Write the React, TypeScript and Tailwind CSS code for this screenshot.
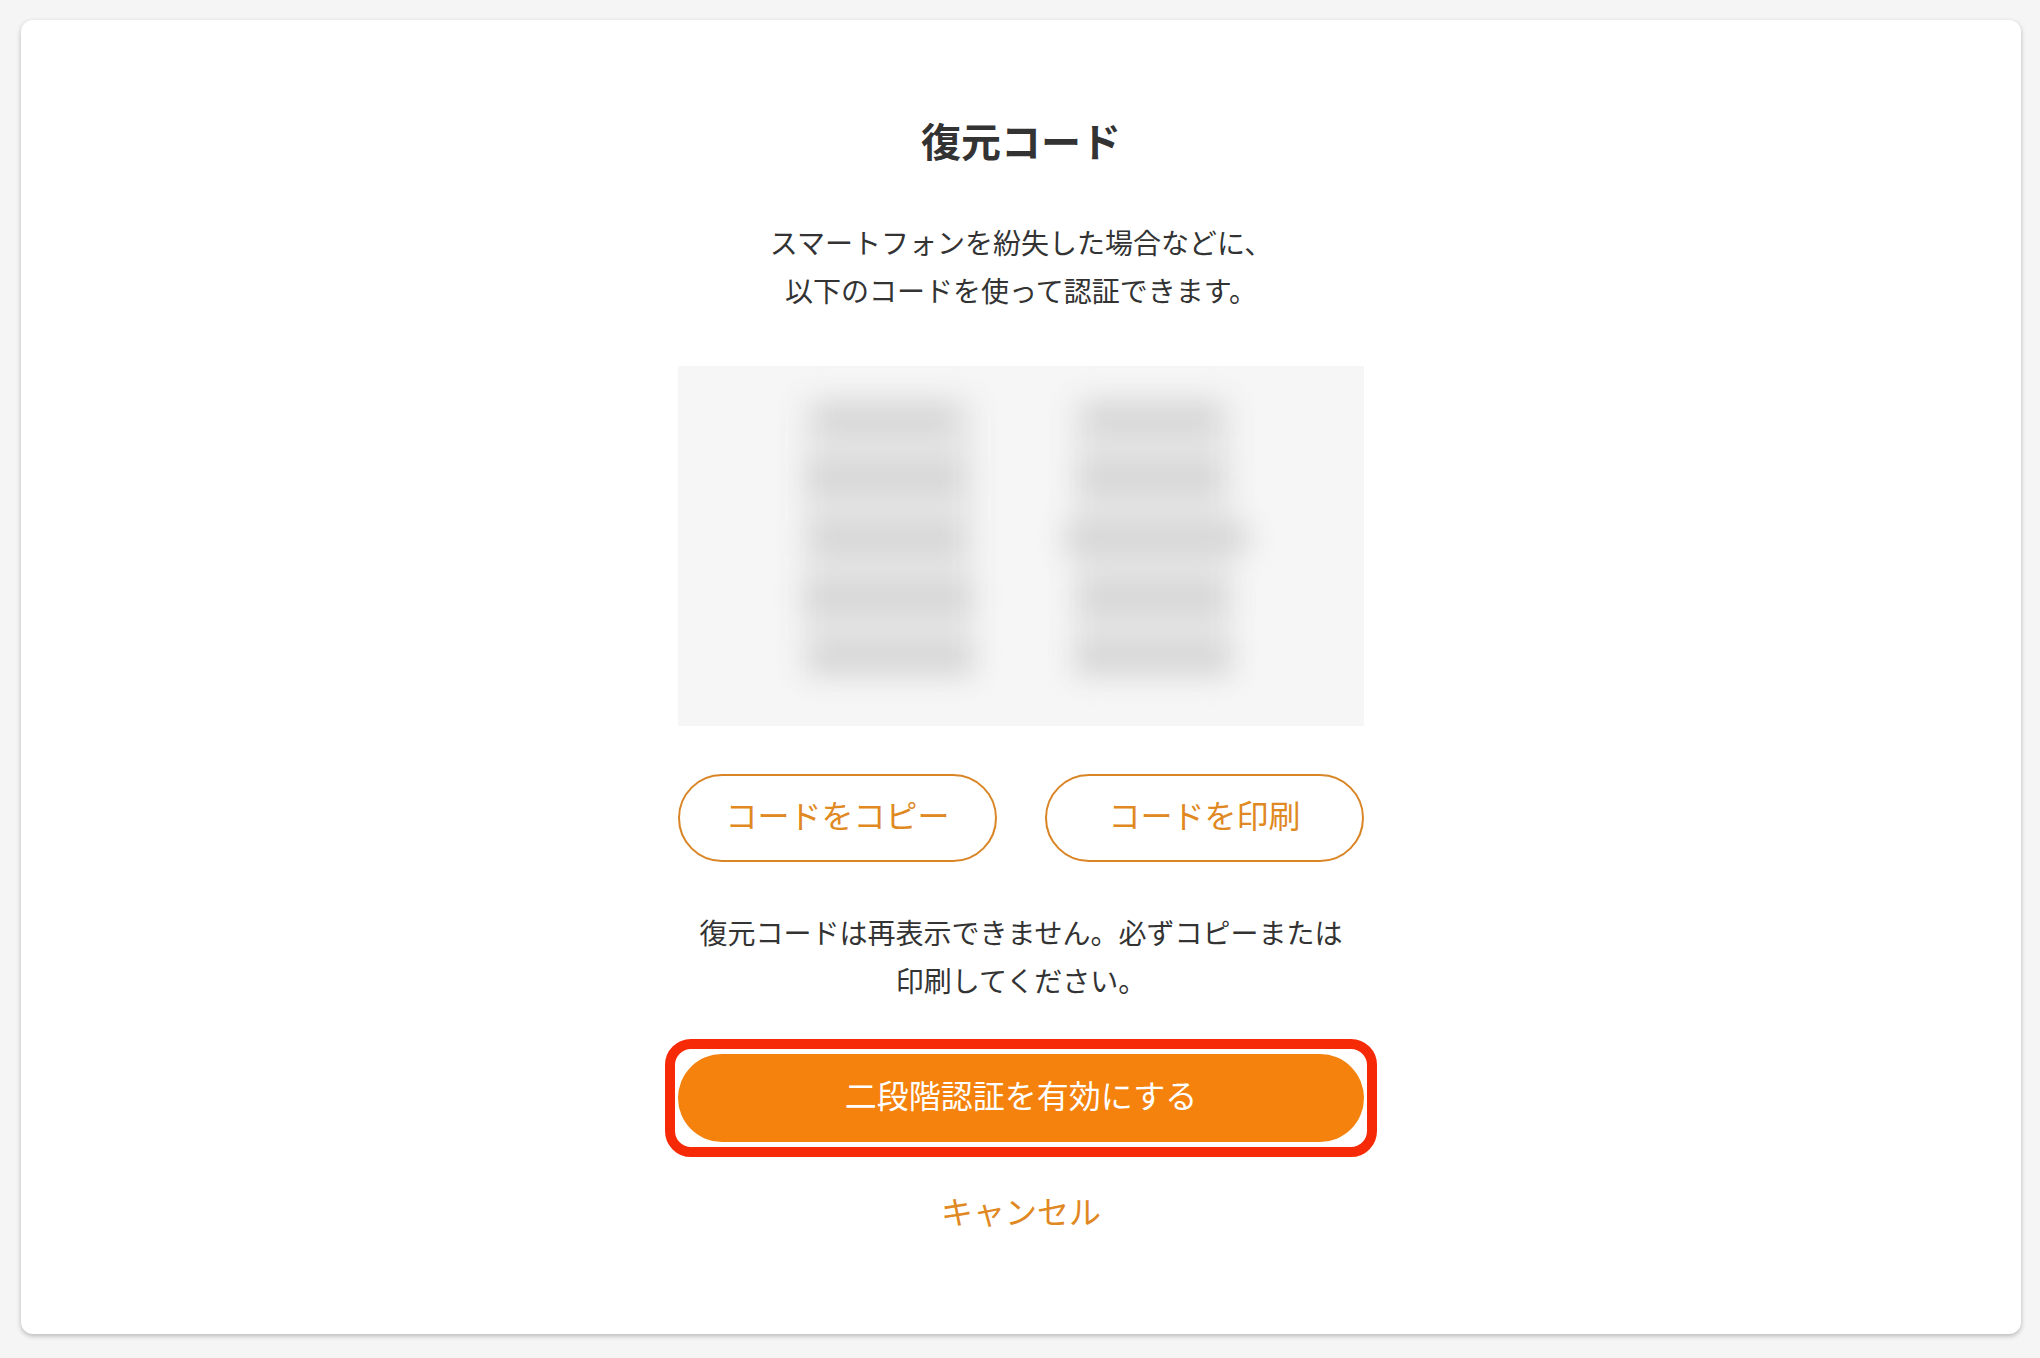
import { ButtonHTMLAttributes } from "react"

const CODE_COLUMNS = [
  {
    width: "w-[172px]",
    rows: ["ml-4 mr-5", "ml-1 mr-3", "ml-2 mr-3", "ml-0 mr-0", "ml-2 mr-0"],
  },
  {
    width: "w-[160px]",
    rows: ["ml-4 mr-4", "ml-2 mr-3", "-ml-2 -mr-4", "ml-2 mr-1", "ml-1 mr-0"],
  },
]

const OutlineButton = ({
  children,
  ...rest
}: ButtonHTMLAttributes<HTMLButtonElement>) => (
  <button
    type="button"
    className="h-[88px] flex-1 rounded-full border-2 border-[#d98526] pb-2 text-[32px] leading-[48px] text-[#e08821]"
    {...rest}
  >
    {children}
  </button>
)

const HiddenCodes = () => (
  <div
    className="mt-[52px] flex h-[360px] justify-center gap-[98px] overflow-hidden bg-[#f6f6f6] pt-8 pr-2"
    aria-hidden="true"
  >
    {CODE_COLUMNS.map((column, index) => (
      <div
        className={`flex h-[280px] flex-col gap-7 bg-[#e6e6e6] py-1 blur-[14px] ${column.width}`}
        key={index}
      >
        {column.rows.map((row, rowIndex) => (
          <div className={`h-8 bg-[#d6d6d6] ${row}`} key={rowIndex} />
        ))}
      </div>
    ))}
  </div>
)

export default function App() {
  return (
    <div className="min-h-screen bg-[#f5f5f5] pt-5 pr-[19px] pb-6 pl-[21px] font-['Noto_Sans_CJK_JP','Noto_Sans',sans-serif] text-[#333333]">
      <main className="rounded-xl bg-white pt-[92px] pb-[100px] shadow-[0_2px_5px_rgba(0,0,0,0.25)]">
        <div className="mx-auto max-w-[686px] text-center">
          <h1 className="text-[40px] leading-[56px] font-bold">復元コード</h1>
          <p className="mt-[50px] text-[28px] leading-[48px]">
            スマートフォンを紛失した場合などに、
            <br />
            以下のコードを使って認証できます。
          </p>
          <HiddenCodes />
          <div className="mt-12 flex gap-12">
            <OutlineButton>コードをコピー</OutlineButton>
            <OutlineButton>コードを印刷</OutlineButton>
          </div>
          <p className="mt-[46px] text-[28px] leading-[48px]">
            復元コードは再表示できません。必ずコピーまたは
            <br />
            印刷してください。
          </p>
          <div className="relative mt-[50px]">
            <button
              type="button"
              className="block h-[88px] w-full rounded-full bg-[#f5820d] pb-2 text-[32px] leading-[48px] text-white"
            >
              二段階認証を有効にする
            </button>
            <div className="pointer-events-none absolute -inset-x-[13px] -inset-y-[15px] rounded-[26px] border-10 border-[#f72a08]" />
          </div>
          <button
            type="button"
            className="mt-11 text-[32px] leading-[48px] text-[#e08821]"
          >
            キャンセル
          </button>
        </div>
      </main>
    </div>
  )
}
